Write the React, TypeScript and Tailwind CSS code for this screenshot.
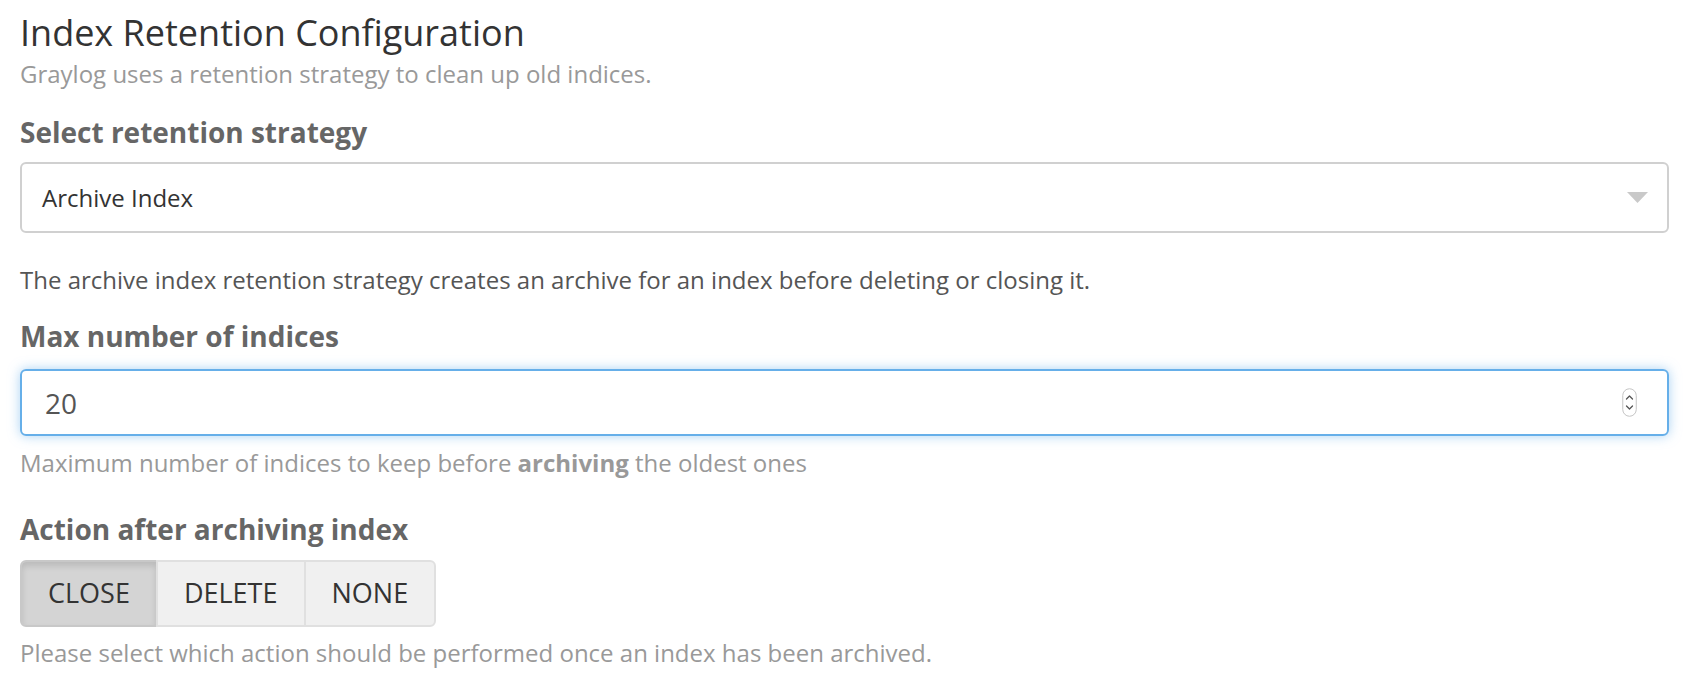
import React from "react";

function Spinner() {
  return (
    <svg width="15" height="29" viewBox="0 0 15 29" className="shrink-0">
      <rect x="0.75" y="0.75" width="13.5" height="27.5" rx="6.75" fill="#fff" stroke="#c4c4c4" strokeWidth="1" />
      <path d="M4.5 11 L7.5 8 L10.5 11" fill="none" stroke="#555" strokeWidth="1.3" strokeLinecap="round" strokeLinejoin="round" />
      <path d="M4.5 18 L7.5 21 L10.5 18" fill="none" stroke="#555" strokeWidth="1.3" strokeLinecap="round" strokeLinejoin="round" />
    </svg>
  );
}

export default function App() {
  return (
    <div className="min-h-screen bg-white pl-[20px] pr-[19px] pt-[11px] font-['Open_Sans',sans-serif]">
      <h2 className="text-[36px] leading-[44px] font-normal text-[#333]">Index Retention Configuration</h2>
      <p className="mt-[3px] text-[24px] leading-[32px] text-[#999]">
        Graylog uses a retention strategy to clean up old indices.
      </p>

      <label className="mt-[24px] block text-[28px] leading-[36px] font-bold text-[#666]">Select retention strategy</label>
      <div className="mt-[12px] flex h-[71px] items-center justify-between rounded-[6px] border-2 border-[#d0d0d0] pl-[20px] pr-[19px]">
        <span className="text-[24px] text-[#333]">Archive Index</span>
        <svg width="21" height="11" viewBox="0 0 21 11">
          <path d="M0 0 H21 L10.5 11 Z" fill="#c9c9c9" />
        </svg>
      </div>

      <p className="mt-[31px] text-[24px] leading-[32px] text-[#555]">
        The archive index retention strategy creates an archive for an index before deleting or closing it.
      </p>

      <label className="mt-[22px] block text-[28px] leading-[36px] font-bold text-[#666]">Max number of indices</label>
      <div className="mt-[15px] flex h-[67px] items-center justify-between rounded-[6px] border-2 border-[#66afe9] pl-[23px] pr-[30px] shadow-[0_0_12px_rgba(102,175,233,0.55)]">
        <span className="text-[28px] text-[#555]">20</span>
        <Spinner />
      </div>
      <p className="mt-[11px] text-[24px] leading-[32px] text-[#999]">
        Maximum number of indices to keep before <b className="font-bold">archiving</b> the oldest ones
      </p>

      <label className="mt-[32px] block text-[28px] leading-[36px] font-bold text-[#666]">Action after archiving index</label>
      <div className="mt-[13px] flex h-[67px] w-fit">
        <button className="rounded-l-[6px] border-2 border-[#c8c8c8] bg-[#d4d4d4] px-[26px] text-[27px] text-[#333] shadow-[inset_0_4px_6px_rgba(0,0,0,0.12)]">
          CLOSE
        </button>
        <button className="-ml-[2px] border-2 border-[#e0e0e0] bg-[#f0f0f0] px-[26px] text-[27px] text-[#333]">
          DELETE
        </button>
        <button className="-ml-[2px] rounded-r-[6px] border-2 border-[#e0e0e0] bg-[#f0f0f0] px-[26px] text-[27px] text-[#333]">
          NONE
        </button>
      </div>
      <p className="mt-[10px] text-[24px] leading-[32px] text-[#999]">
        Please select which action should be performed once an index has been archived.
      </p>
    </div>
  );
}
